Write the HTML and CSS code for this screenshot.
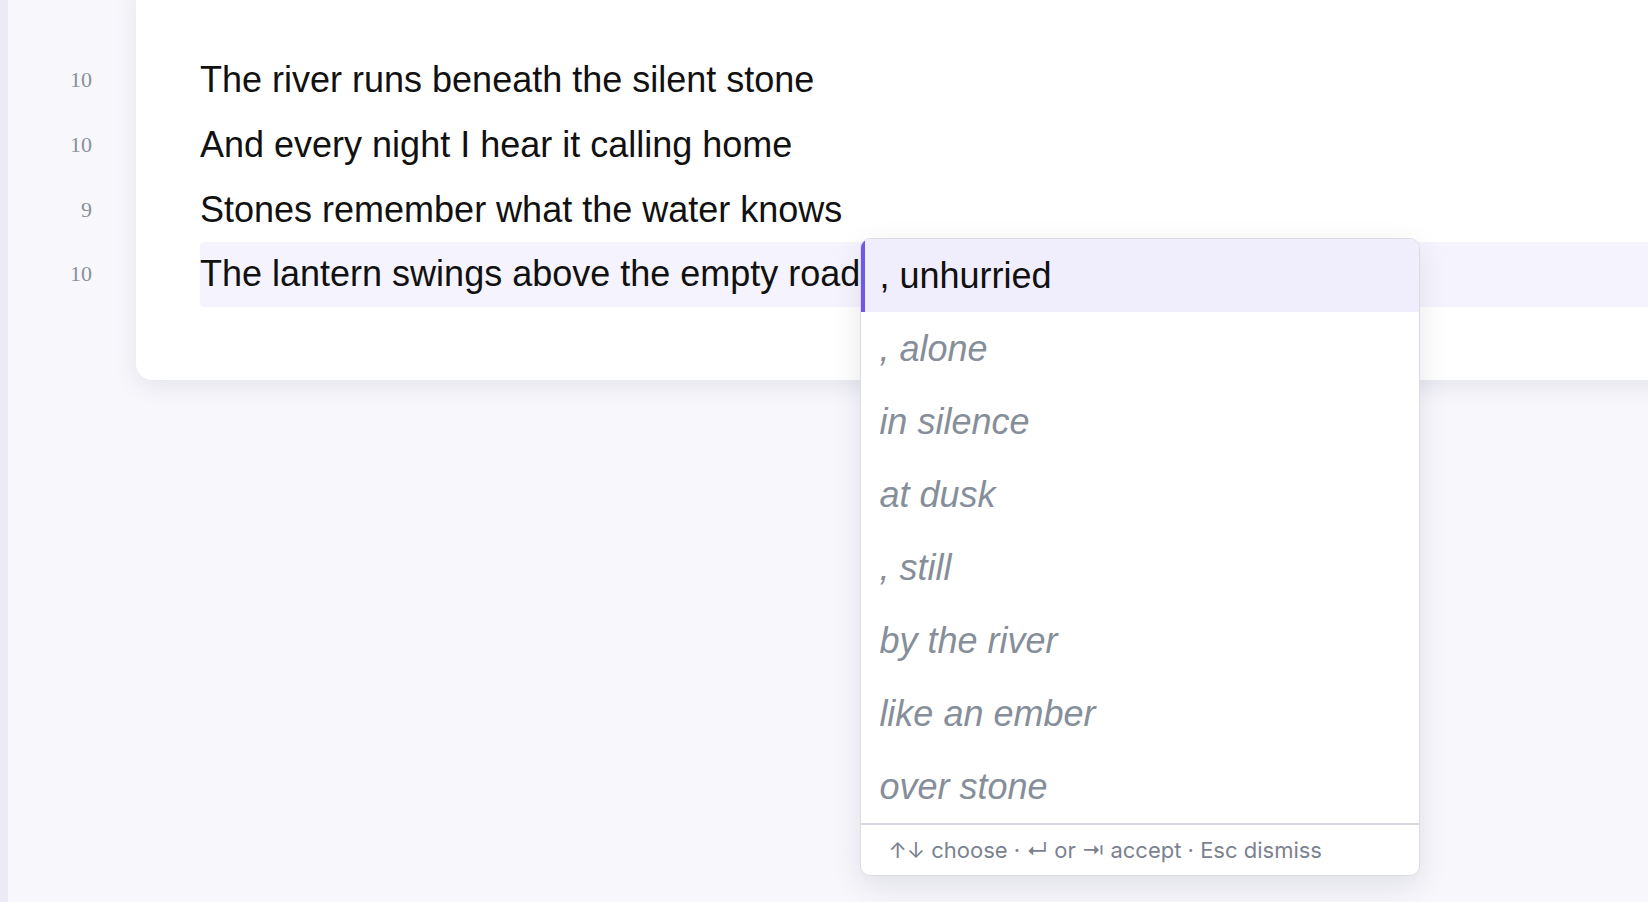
FILE: index.html
```html
<!DOCTYPE html>
<html lang="en">
<head>
    <meta charset="UTF-8">
    <meta name="viewport" content="width=device-width, initial-scale=1.0">
    <title>Poem Editor</title>
    <link rel="stylesheet" href="styles.css">
</head>
<body>

    <div class="rail"></div>

    <div class="editor">
        <!-- syllable counts -->
        <div class="gutter">
            <div class="count">10</div>
            <div class="count">10</div>
            <div class="count">9</div>
            <div class="count">10</div>
        </div>

        <div class="sheet">
            <div class="line">The river runs beneath the silent stone</div>
            <div class="line">And every night I hear it calling home</div>
            <div class="line">Stones remember what the water knows</div>
            <div class="line active">The lantern swings above the empty road<span class="caret">
                <div class="suggest">
                    <div class="option selected">, unhurried</div>
                    <div class="option">, alone</div>
                    <div class="option">in silence</div>
                    <div class="option">at dusk</div>
                    <div class="option">, still</div>
                    <div class="option">by the river</div>
                    <div class="option">like an ember</div>
                    <div class="option">over stone</div>
                    <div class="hint">↑↓ choose · ↵ or ⇥ accept · Esc dismiss</div>
                </div>
            </span></div>
        </div>
    </div>

</body>
</html>
```

FILE: styles.css
```css
* {
    box-sizing: border-box;
}

body {
    margin: 0;
    height: 100vh;
    display: flex;
    overflow: hidden;
    background-color: #f7f7fc;
    font-family: "Liberation Sans", Arial, sans-serif;
}

.rail {
    width: 8px;
    flex-shrink: 0;
    background-color: #ebeaf5;
}

.editor {
    display: flex;
    align-items: flex-start;
}

.gutter {
    width: 128px;
    flex-shrink: 0;
    padding: 48px 44px 0 0;
    text-align: right;
    font-family: "Liberation Serif", "Times New Roman", serif;
    font-size: 22px;
    color: #8a9099;
}

.count {
    line-height: 64.8px;
}

.sheet {
    width: 1560px;
    flex-shrink: 0;
    margin-top: -20px;
    padding: 68px 0 73px 64px;
    background-color: #fff;
    border-radius: 16px;
    box-shadow: 0 6px 24px rgba(30, 30, 70, 0.09);
}

.line {
    font-size: 36px;
    line-height: 64.8px;
    color: #111;
    white-space: nowrap;
}

.line.active {
    background-color: #f5f4fe;
    border-radius: 4px 0 0 4px;
}

/* Autocomplete popup */
.caret {
    position: relative;
}

.suggest {
    position: absolute;
    left: 0;
    top: -15px;
    width: 560px;
    background-color: #fff;
    border: 1px solid #dcdde3;
    border-radius: 10px;
    box-shadow: 0 10px 30px rgba(20, 20, 50, 0.1);
    overflow: hidden;
    z-index: 10;
}

.option {
    padding: 14px 18px;
    line-height: 45px;
    font-size: 36px;
    font-style: italic;
    color: #868e99;
    white-space: nowrap;
}

.option.selected {
    font-style: normal;
    color: #111;
    background-color: #f0edfd;
    box-shadow: inset 4px 0 0 #7355e8;
}

.hint {
    border-top: 2px solid #d5d8de;
    padding: 12px 27px;
    font-family: Inter, "Liberation Sans", sans-serif;
    font-size: 22px;
    line-height: 26px;
    color: #7b8290;
    white-space: nowrap;
}
```
